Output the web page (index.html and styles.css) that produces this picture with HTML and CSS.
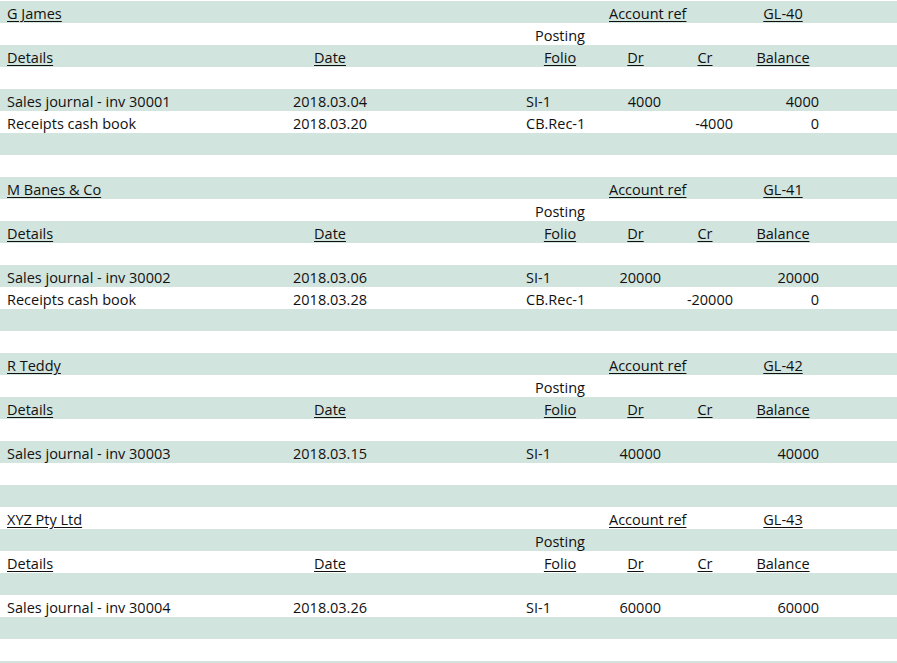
FILE: index.html
```html
<!DOCTYPE html>
<html>
<head>
<meta charset="utf-8">
<link rel="stylesheet" href="styles.css">
</head>
<body>
<div class="sheet">
  <div class="row"><span class="c-det u">G James</span><span class="c-acct u">Account ref</span><span class="c-bal ctr u">GL-40</span></div>
  <div class="row"><span class="c-folio ctr">Posting</span></div>
  <div class="row"><span class="c-det u">Details</span><span class="c-date u">Date</span><span class="c-folio ctr u">Folio</span><span class="c-dr ctr u">Dr</span><span class="c-cr ctr u">Cr</span><span class="c-bal ctr u">Balance</span></div>
  <div class="row"></div>
  <div class="row"><span class="c-det">Sales journal - inv 30001</span><span class="c-date">2018.03.04</span><span class="c-folio">SI-1</span><span class="c-dr num">4000</span><span class="c-bal num">4000</span></div>
  <div class="row"><span class="c-det">Receipts cash book</span><span class="c-date">2018.03.20</span><span class="c-folio">CB.Rec-1</span><span class="c-cr num">-4000</span><span class="c-bal num">0</span></div>
  <div class="row"></div>
  <div class="row"></div>

  <div class="row"><span class="c-det u">M Banes &amp; Co</span><span class="c-acct u">Account ref</span><span class="c-bal ctr u">GL-41</span></div>
  <div class="row"><span class="c-folio ctr">Posting</span></div>
  <div class="row"><span class="c-det u">Details</span><span class="c-date u">Date</span><span class="c-folio ctr u">Folio</span><span class="c-dr ctr u">Dr</span><span class="c-cr ctr u">Cr</span><span class="c-bal ctr u">Balance</span></div>
  <div class="row"></div>
  <div class="row"><span class="c-det">Sales journal - inv 30002</span><span class="c-date">2018.03.06</span><span class="c-folio">SI-1</span><span class="c-dr num">20000</span><span class="c-bal num">20000</span></div>
  <div class="row"><span class="c-det">Receipts cash book</span><span class="c-date">2018.03.28</span><span class="c-folio">CB.Rec-1</span><span class="c-cr num">-20000</span><span class="c-bal num">0</span></div>
  <div class="row"></div>
  <div class="row"></div>

  <div class="row"><span class="c-det u">R Teddy</span><span class="c-acct u">Account ref</span><span class="c-bal ctr u">GL-42</span></div>
  <div class="row"><span class="c-folio ctr">Posting</span></div>
  <div class="row"><span class="c-det u">Details</span><span class="c-date u">Date</span><span class="c-folio ctr u">Folio</span><span class="c-dr ctr u">Dr</span><span class="c-cr ctr u">Cr</span><span class="c-bal ctr u">Balance</span></div>
  <div class="row"></div>
  <div class="row"><span class="c-det">Sales journal - inv 30003</span><span class="c-date">2018.03.15</span><span class="c-folio">SI-1</span><span class="c-dr num">40000</span><span class="c-bal num">40000</span></div>
  <div class="row"></div>
  <div class="row"></div>

  <div class="row"><span class="c-det u">XYZ Pty Ltd</span><span class="c-acct u">Account ref</span><span class="c-bal ctr u">GL-43</span></div>
  <div class="row"><span class="c-folio ctr">Posting</span></div>
  <div class="row"><span class="c-det u">Details</span><span class="c-date u">Date</span><span class="c-folio ctr u">Folio</span><span class="c-dr ctr u">Dr</span><span class="c-cr ctr u">Cr</span><span class="c-bal ctr u">Balance</span></div>
  <div class="row"></div>
  <div class="row"><span class="c-det">Sales journal - inv 30004</span><span class="c-date">2018.03.26</span><span class="c-folio">SI-1</span><span class="c-dr num">60000</span><span class="c-bal num">60000</span></div>
  <div class="row"></div>
  <div class="row"></div>
  <div class="row"></div>
</div>
</body>
</html>
```

FILE: styles.css
```css
html, body {
  margin: 0;
  padding: 0;
  background: #ffffff;
}
body {
  padding-top: 1px;
  font-family: "Open Sans", "Noto Sans", "DejaVu Sans", sans-serif;
  font-size: 14.5px;
  color: #111111;
  overflow: hidden;
}
.sheet {
  display: flex;
  flex-direction: column;
}
.row {
  display: grid;
  grid-template-columns: 290px 80px 152px 76px 67px 72px 86px 1fr;
  grid-template-rows: 22px;
  height: 22px;
  white-space: nowrap;
}
.row:nth-child(odd) {
  background: #d1e4de;
}
.row span {
  grid-row: 1;
  padding-top: 4px;
  line-height: 18px;
}
.u {
  text-decoration: underline;
  text-underline-offset: 2px;
}
.c-det { grid-column: 1; padding-left: 7px; }
.c-date { grid-column: 2; text-align: center; }
.c-folio { grid-column: 4; padding-left: 4px; }
.c-folio.ctr { padding-left: 0; text-align: center; }
.c-dr { grid-column: 5; }
.c-cr { grid-column: 6; }
.c-bal { grid-column: 7; }
.c-acct { grid-column: 5 / span 2; padding-left: 11px; }
.c-dr.ctr { text-align: center; padding-left: 8px; }
.c-cr.ctr { text-align: center; padding-left: 8px; }
.c-bal.ctr { text-align: center; padding-left: 6px; }
.num { text-align: right; padding-right: 4px; }
```
